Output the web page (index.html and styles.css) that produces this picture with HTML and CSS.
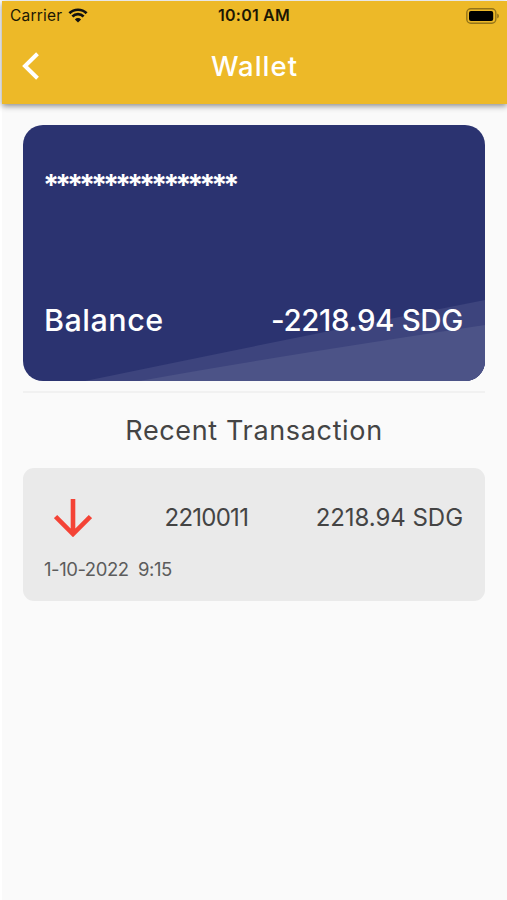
FILE: index.html
```html
<!DOCTYPE html>
<html lang="en">
<head>
  <meta charset="UTF-8">
  <meta name="viewport" content="width=device-width, initial-scale=1.0">
  <title>Wallet</title>
  <link rel="stylesheet" href="styles.css">
</head>
<body>
  <div class="screen">
    <header class="app-bar">
      <div class="status">
        <div class="carrier">
          <span class="carrier-name">Carrier</span>
          <svg class="wifi" viewBox="0 0 20 15" width="20" height="15">
            <path d="M1.4 5.3a12.2 12.2 0 0 1 17.2 0" />
            <path d="M4.4 8.5a8 8 0 0 1 11.2 0" />
            <path class="dot" d="M10 14.6L6.9 11.4a4.4 4.4 0 0 1 6.2 0z" />
          </svg>
        </div>
        <span class="time">10:01 AM</span>
        <svg class="battery" viewBox="0 0 34 16" width="34" height="16">
          <rect class="shell" x="0.8" y="0.8" width="29" height="14.4" rx="4" />
          <rect x="3" y="3" width="24.2" height="10" rx="2" />
          <path class="cap" d="M31.2 5.6q1.8 .7 1.8 2.4t-1.8 2.4z" />
        </svg>
      </div>
      <div class="nav">
        <svg class="back" viewBox="0 0 18 28" width="18" height="28">
          <path d="M15.5 1.8L3 14l12.5 12.2" />
        </svg>
        <h1 class="title">Wallet</h1>
      </div>
    </header>

    <main class="content">
      <section class="card">
        <svg class="waves" viewBox="0 0 462 256" preserveAspectRatio="none">
          <path class="wave-back" d="M62 256Q240 219 462 175V256z" />
          <path class="wave-front" d="M116 256Q237 234 462 200V256z" />
        </svg>
        <div class="card-number">****************</div>
        <div class="card-row">
          <span class="balance">Balance</span>
          <span class="amount">-2218.94 SDG</span>
        </div>
      </section>

      <h2 class="section-title">Recent Transaction</h2>

      <article class="transaction">
        <div class="transaction-row">
          <svg class="arrow" viewBox="0 0 38 38" width="38" height="38">
            <path d="M19 0v34M1.6 17.5L19 35l17.4-17.5" />
          </svg>
          <span class="transaction-id">2210011</span>
          <span class="transaction-amount">2218.94 SDG</span>
        </div>
        <div class="transaction-date">1-10-2022&nbsp; 9:15</div>
      </article>
    </main>
  </div>
</body>
</html>
```
FILE: styles.css
```css
* { margin: 0; padding: 0; box-sizing: border-box; }
body {
  background: #fff;
  font-family: Inter, "Open Sans", sans-serif;
  color: #444;
  overflow: hidden;
}
span, h1, h2 { white-space: nowrap; }
.screen { height: 900px; padding: 1px 0 0 2px; }

/* App bar */
.app-bar {
  position: relative;
  height: 103px;
  background: #edb928;
  box-shadow: 0 2px 6px rgba(0,0,0,0.45);
}
.status {
  display: grid;
  grid-template-columns: 1fr auto 1fr;
  align-items: center;
  height: 29px;
  padding: 0 8px 0 7px;
  color: #1c1704;
}
.carrier { display: flex; align-items: center; gap: 6px; padding-left: 1px; }
.carrier-name { font-size: 15.5px; letter-spacing: 0.2px; }
.wifi { fill: none; stroke: #111; stroke-width: 2.7; }
.wifi .dot { fill: #111; stroke: none; }
.time { font-size: 16px; font-weight: 600; line-height: 18px; padding-bottom: 1px; letter-spacing: 0.2px; }
.battery { justify-self: end; margin-right: -1px; }
.battery .shell { fill: none; stroke: #947419; stroke-width: 1.4; }
.battery .cap { fill: #947419; }

.nav {
  display: grid;
  grid-template-columns: 1fr auto 1fr;
  align-items: center;
  height: 72px;
  padding: 0 20px;
}
.back { fill: none; stroke: #fff; stroke-width: 4; }
.title { font-size: 27.5px; font-weight: 500; letter-spacing: 1px; color: #fff; }

/* Balance card */
.content {
  height: 796px;
  padding: 21px 22px 0 21px;
  background: #fafafa;
}
.card {
  position: relative;
  display: flex;
  flex-direction: column;
  justify-content: space-between;
  height: 256px;
  padding: 42px 22px 40px 20px;
  border-radius: 20px;
  background: #2b3370;
  overflow: hidden;
  color: #fff;
}
.waves { position: absolute; inset: 0; width: 100%; height: 100%; }
.wave-back { fill: #3d447d; }
.wave-front { fill: #4c5387; }
.card-number {
  position: relative;
  font-size: 29px;
  font-weight: 700;
  line-height: 36px;
  letter-spacing: -4.2px;
}
.card-row {
  position: relative;
  display: flex;
  justify-content: space-between;
  padding-left: 1px;
  font-size: 29.5px;
  font-weight: 500;
  line-height: 42px;
}
.balance { font-size: 30.5px; letter-spacing: 0.5px; }
.amount { letter-spacing: -0.35px; }

/* Transactions */
.section-title {
  margin-top: 10px;
  padding-top: 18px;
  border-top: 2px solid #f1f1f1;
  font-size: 27px;
  font-weight: 400;
  line-height: 40px;
  letter-spacing: 0.65px;
  text-align: center;
}
.transaction {
  height: 133px;
  margin-top: 17px;
  padding: 30px 22px 0 21px;
  border-radius: 11px;
  background: #eaeaea;
}
.transaction-row {
  display: flex;
  align-items: center;
  justify-content: space-between;
  height: 39px;
  padding-left: 10px;
  font-size: 24px;
  font-weight: 400;
}
.transaction-id { padding-left: 5px; letter-spacing: -0.75px; }
.transaction-amount { letter-spacing: -0.05px; }
.arrow { fill: none; stroke: #f44336; stroke-width: 4.6; }
.transaction-date {
  margin-top: 18px;
  font-size: 18.5px;
  font-weight: 400;
  line-height: 28px;
  letter-spacing: -0.45px;
  color: #5c5c5c;
}
```
